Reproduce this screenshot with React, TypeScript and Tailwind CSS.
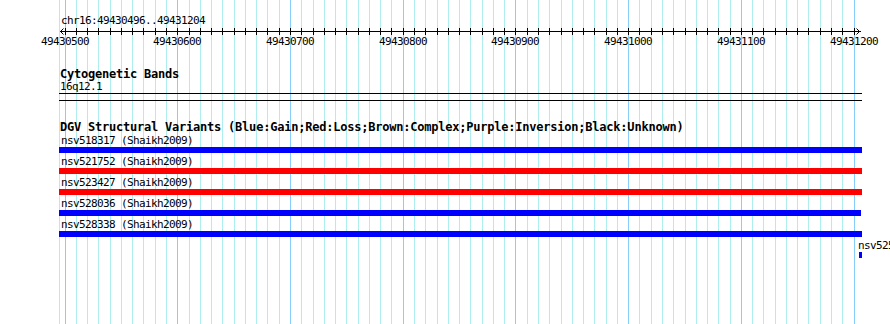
import React from "react";

const minorXs = Array.from({ length: 71 }, (_, k) => ({
  x: Math.round(64.6 + k * 11.271),
  major: k % 10 === 0,
}));

const labels = [
  "49430500",
  "49430600",
  "49430700",
  "49430800",
  "49430900",
  "49431000",
  "49431100",
  "49431200",
];

const variants = [
  { name: "nsv518317 (Shaikh2009)", color: "bg-[#0000ff]", w: "w-[803px]" },
  { name: "nsv521752 (Shaikh2009)", color: "bg-[#ff0000]", w: "w-[803px]" },
  { name: "nsv523427 (Shaikh2009)", color: "bg-[#ff0000]", w: "w-[803px]" },
  { name: "nsv528036 (Shaikh2009)", color: "bg-[#0000ff]", w: "w-[802px]" },
  { name: "nsv528338 (Shaikh2009)", color: "bg-[#0000ff]", w: "w-[803px]" },
];

function Grid() {
  return (
    <svg className="absolute left-0 top-0" width={890} height={324}>
      <rect x={59} y={0} width={1} height={324} fill="#afeeee" />
      {minorXs.map((m) => (
        <rect
          key={m.x}
          x={m.x}
          y={0}
          width={1}
          height={324}
          fill={m.major ? "#87cefa" : "#afeeee"}
        />
      ))}
    </svg>
  );
}

function Ruler() {
  return (
    <svg width={803} height={9} className="block">
      <rect x={1} y={4} width={801} height={1} fill="#000" />
      {minorXs.map((m) => (
        <rect key={m.x} x={m.x - 59} y={1} width={1} height={7} fill="#000" />
      ))}
      <path d="M4.5 1.5 L1.5 4.5 L4.5 7.5" stroke="#000" strokeWidth={1} fill="none" />
      <path d="M797.5 1.5 L800.5 4.5 L797.5 7.5" stroke="#000" strokeWidth={1} fill="none" />
    </svg>
  );
}

export default function App() {
  const small = "text-[11px] leading-[12px] tracking-[-0.62px] whitespace-nowrap";
  const bold = "text-[12px] leading-[13px] font-bold tracking-[-0.22px] whitespace-nowrap";
  return (
    <div className="relative w-[890px] h-[324px] overflow-hidden bg-white text-black font-['DejaVu_Sans_Mono',monospace]">
      <Grid />
      <div className="relative flex flex-col pl-[59px]">
        <div className="h-[15px]" />
        <div className={`${small} h-[12px] pl-[2px]`}>chr16:49430496..49431204</div>
        <Ruler />
        <div className={`${small} relative h-[12px]`}>
          {labels.map((l, i) => (
            <span
              key={l}
              className="absolute top-0"
              style={{ left: minorXs[i * 10].x - 59 - 24 }}
            >
              {l}
            </span>
          ))}
        </div>
        <div className="h-[20px]" />
        <div className={`${bold} h-[13px] pl-[1px]`}>Cytogenetic Bands</div>
        <div className={`${small} h-[12px] pl-[1px]`}>16q12.1</div>
        <div className="h-px w-[803px] bg-black" />
        <div className="h-[6px]" />
        <div className="h-px w-[803px] bg-black" />
        <div className="h-[20px]" />
        <div className={`${bold} h-[13px] pl-[1px]`}>
          DGV Structural Variants (Blue:Gain;Red:Loss;Brown:Complex;Purple:Inversion;Black:Unknown)
        </div>
        <div className="h-px" />
        <div className="flex flex-col gap-[3px]">
          {variants.map((v) => (
            <div key={v.name} className="flex flex-col">
              <div className={`${small} h-[12px] pl-[2px]`}>{v.name}</div>
              <div className={`h-[6px] ${v.w} ${v.color}`} />
            </div>
          ))}
          <div className="flex flex-col pl-[799px]">
            <div className={`${small} h-[12px]`}>nsv525</div>
            <div className="h-[6px] w-[3px] ml-px bg-[#0000ff]" />
          </div>
        </div>
      </div>
    </div>
  );
}
